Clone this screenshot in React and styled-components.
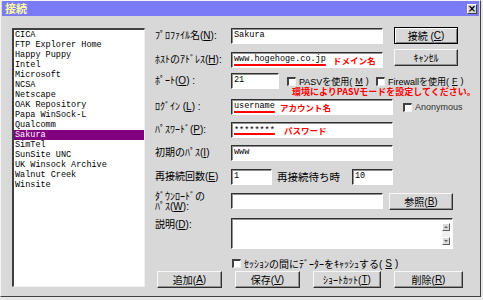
import styled, { createGlobalStyle } from "styled-components";

const GlobalStyle = createGlobalStyle`
  html, body {
    margin: 0;
    padding: 0;
    background: #e8e8e8;
  }
  body {
    width: 483px;
    height: 300px;
    overflow: hidden;
  }
`;

const ui = `"Liberation Sans", "Noto Sans CJK JP", sans-serif`;
const jp = `"Noto Sans CJK JP", sans-serif`;
const mono = `"Liberation Mono", "DejaVu Sans Mono", monospace`;

const sites = [
  "CICA",
  "FTP Explorer Home",
  "Happy Puppy",
  "Intel",
  "Microsoft",
  "NCSA",
  "Netscape",
  "OAK Repository",
  "Papa WinSock-L",
  "Qualcomm",
  "Sakura",
  "SimTel",
  "SunSite UNC",
  "UK Winsock Archive",
  "Walnut Creek",
  "Winsite",
];

export default function App() {
  return (
    <>
      <GlobalStyle />
      <Window>
        <TitleBar>
          <TitleText>接続</TitleText>
          <CloseBox>×</CloseBox>
        </TitleBar>
        <Content>
          <ListBox>
            {sites.map(name => (
              <ListItem key={name} $selected={name === "Sakura"}>
                {name}
              </ListItem>
            ))}
          </ListBox>

          <Form>
            <Row $h={24}>
              <Label>ﾌﾟﾛﾌｧｲﾙ名(<Key>N</Key>):</Label>
              <Field $w={152}>Sakura</Field>
              <DefaultButton $w={64} $ml={11}>
                接続 (<Key>C</Key>)
              </DefaultButton>
            </Row>

            <Row $h={21}>
              <Label>ﾎｽﾄのｱﾄﾞﾚｽ(<Key>H</Key>):</Label>
              <Field $w={152}>
                <Marked>www.hogehoge.co.jp</Marked>
                <Note $left={101} $top={1}>ドメイン名</Note>
              </Field>
              <Button $w={64} $ml={11} $mt={-3}>
                ｷｬﾝｾﾙ
              </Button>
            </Row>

            <Row $h={26}>
              <Label>ﾎﾟｰﾄ(<Key>O</Key>) :</Label>
              <Field $w={48}>21</Field>
              <CheckLabel $w={89} $ml={8} $small>
                <CheckBox />
                PASVを使用(<Key>M</Key>)
              </CheckLabel>
              <CheckLabel $small>
                <CheckBox />
                Firewallを使用(<Key>F</Key>)
              </CheckLabel>
              <Warning>環境によりPASVモードを設定してください。</Warning>
            </Row>

            <Row $h={23}>
              <Label>ﾛｸﾞｲﾝ (<Key>L</Key>) :</Label>
              <Field $w={162}>
                <Marked>username</Marked>
                <Note $left={48} $top={1}>アカウント名</Note>
              </Field>
              <CheckLabel $ml={10} $small $muted>
                <CheckBox />
                Anonymous
              </CheckLabel>
            </Row>

            <Row $h={23}>
              <Label>ﾊﾟｽﾜｰﾄﾞ(<Key>P</Key>):</Label>
              <Field $w={162}>
                <Marked $low>********</Marked>
                <Note $left={52} $top={1}>パスワード</Note>
              </Field>
            </Row>

            <Row $h={24}>
              <Label>初期のﾊﾟｽ(<Key>I</Key>)</Label>
              <Field $w={162}>www</Field>
            </Row>

            <Row $h={24}>
              <Label>再接続回数(<Key>E</Key>)</Label>
              <Field $w={41}>1</Field>
              <InlineLabel>再接続待ち時</InlineLabel>
              <Field $w={41}>10</Field>
            </Row>

            <Row $h={25}>
              <Label $two>
                ﾀﾞｳﾝﾛｰﾄﾞの
                <br />
                ﾊﾟｽ(<Key>W</Key>):
              </Label>
              <Field $w={152} />
              <Button $w={64} $ml={6}>
                参照(<Key>B</Key>)
              </Button>
            </Row>

            <Row $h={37}>
              <Label $top>説明(<Key>D</Key>):</Label>
              <TextArea>
                <ScrollColumn>
                  <Arrow $up />
                  <Arrow />
                </ScrollColumn>
              </TextArea>
            </Row>

            <Row $h={16}>
              <CheckLabel $ml={77}>
                <CheckBox />
                ｾｯｼｮﾝの間にﾃﾞｰﾀｰをｷｬｯｼｭする(<Key>S</Key>)
              </CheckLabel>
            </Row>

            <ButtonRow>
              <Button $w={65}>
                追加(<Key>A</Key>)
              </Button>
              <Button $w={65}>
                保存(<Key>V</Key>)
              </Button>
              <Button $w={68}>
                ｼｮｰﾄｶｯﾄ(<Key>T</Key>)
              </Button>
              <Button $w={69}>
                削除(<Key>R</Key>)
              </Button>
            </ButtonRow>
          </Form>
        </Content>
      </Window>
    </>
  );
}

const Window = styled.div`
  width: 481px;
  height: 297px;
  box-sizing: border-box;
  background: #d8d8d8;
  border-top: 1px solid #f4f4f4;
  border-left: 1px solid #f4f4f4;
  border-right: 1px solid #404040;
  border-bottom: 1px solid #404040;
  display: flex;
  flex-direction: column;
  font-family: ${ui};
  font-size: 10px;
  color: #000;
`;

const TitleBar = styled.div`
  height: 15px;
  margin: 0 1px;
  padding: 0 2px 0 3px;
  background: #7b7bf7;
  display: flex;
  align-items: center;
  justify-content: space-between;
  flex: none;
`;

const TitleText = styled.span`
  font-family: ${jp};
  font-weight: 700;
  font-size: 11px;
  line-height: 15px;
  color: #ffffa0;
`;

const CloseBox = styled.div`
  width: 10px;
  height: 10px;
  box-sizing: border-box;
  background: #d8d8d8;
  border-top: 1px solid #fff;
  border-left: 1px solid #fff;
  border-right: 1px solid #404040;
  border-bottom: 1px solid #404040;
  display: flex;
  align-items: center;
  justify-content: center;
  font-family: "DejaVu Sans", sans-serif;
  font-weight: 700;
  font-size: 10px;
  line-height: 8px;
`;

const Content = styled.div`
  display: flex;
  padding: 12px 0 0 11px;
`;

const ListBox = styled.div`
  width: 133px;
  height: 259px;
  box-sizing: border-box;
  flex: none;
  background: #fff;
  border-top: 2px solid #404040;
  border-left: 2px solid #404040;
  border-right: 1px solid #f0f0f0;
  border-bottom: 1px solid #f0f0f0;
  font-family: ${mono};
  font-size: 8.5px;
  line-height: 10px;
`;

const ListItem = styled.div`
  height: 10px;
  padding-left: 1px;
  white-space: nowrap;
  background: ${p => (p.$selected ? "#800080" : "transparent")};
  color: ${p => (p.$selected ? "#fff" : "#000")};
`;

const Form = styled.div`
  margin-left: 10px;
  width: 325px;
  display: flex;
  flex-direction: column;
`;

const Row = styled.div`
  position: relative;
  height: ${p => p.$h}px;
  display: flex;
  align-items: flex-start;
  flex: none;
`;

const Label = styled.div`
  width: 76px;
  flex: none;
  white-space: nowrap;
  line-height: ${p => (p.$two ? "10px" : p.$top ? "12px" : "16px")};
  margin-top: ${p => (p.$two ? "-1px" : p.$top ? "1px" : "0")};
`;

const InlineLabel = styled.div`
  width: 75px;
  margin-left: 5px;
  line-height: 16px;
  font-size: 10.5px;
  white-space: nowrap;
`;

const Key = styled.span`
  text-decoration: underline;
`;

const Field = styled.div`
  position: relative;
  width: ${p => p.$w}px;
  height: 16px;
  box-sizing: border-box;
  flex: none;
  background: #fff;
  border-top: 1px solid #303030;
  border-left: 1px solid #303030;
  border-right: 1px solid #fff;
  border-bottom: 1px solid #fff;
  box-shadow: inset 1px 1px #909090;
  padding-left: 2px;
  font-family: ${mono};
  font-size: 8.5px;
  line-height: 13px;
  white-space: nowrap;
`;

const Marked = styled.span`
  display: inline-block;
  line-height: ${p => (p.$low ? "17px" : "13px")};
  text-decoration: underline;
  text-decoration-color: #ff0000;
  text-decoration-thickness: 2px;
  text-underline-offset: ${p => (p.$low ? "0px" : "3px")};
`;

const Note = styled.span`
  position: absolute;
  left: ${p => p.$left}px;
  top: ${p => p.$top}px;
  font-family: ${jp};
  font-weight: 700;
  font-size: 8.5px;
  line-height: 12px;
  color: #ff0000;
  white-space: nowrap;
`;

const Warning = styled.span`
  position: absolute;
  left: 137px;
  top: 13px;
  font-family: ${jp};
  font-weight: 700;
  font-size: 9px;
  line-height: 12px;
  color: #ff0000;
  white-space: nowrap;
`;

const CheckLabel = styled.div`
  display: flex;
  align-items: center;
  gap: 3px;
  height: 16px;
  flex: none;
  white-space: nowrap;
  font-size: ${p => (p.$small ? "9px" : "10px")};
  width: ${p => (p.$w ? `${p.$w}px` : "auto")};
  margin-left: ${p => p.$ml || 0}px;
  color: ${p => (p.$muted ? "#303030" : "#000")};
`;

const CheckBox = styled.span`
  width: 9px;
  height: 9px;
  box-sizing: border-box;
  flex: none;
  background: #fff;
  border-top: 2px solid #404040;
  border-left: 2px solid #404040;
  border-right: 1px solid #f0f0f0;
  border-bottom: 1px solid #f0f0f0;
`;

const Button = styled.div`
  width: ${p => p.$w}px;
  height: 17px;
  margin-left: ${p => p.$ml || 0}px;
  margin-top: ${p => p.$mt || 0}px;
  box-sizing: border-box;
  flex: none;
  display: flex;
  align-items: center;
  justify-content: center;
  background: #d8d8d8;
  border-top: 1px solid #f8f8f8;
  border-left: 1px solid #f8f8f8;
  border-right: 1px solid #303030;
  border-bottom: 1px solid #303030;
  box-shadow: inset -1px -1px #909090;
  white-space: nowrap;
`;

const DefaultButton = styled(Button)`
  margin-top: -1px;
  border: 1px solid #000;
  box-shadow: inset 1px 1px #fff, inset -1px -1px #808080;
`;

const TextArea = styled.div`
  width: 222px;
  height: 31px;
  box-sizing: border-box;
  flex: none;
  background: #fff;
  border-top: 1px solid #303030;
  border-left: 1px solid #303030;
  border-right: 1px solid #fff;
  border-bottom: 1px solid #fff;
  box-shadow: inset 1px 1px #909090;
  display: flex;
  justify-content: flex-end;
  padding: 4px 2px 3px 0;
`;

const ScrollColumn = styled.div`
  width: 8px;
  display: flex;
  flex-direction: column;
  justify-content: space-between;
  background: #f0f0f0;
`;

const Arrow = styled.span`
  width: 8px;
  height: 8px;
  box-sizing: border-box;
  background: #d8d8d8;
  border-top: 1px solid #fff;
  border-left: 1px solid #fff;
  border-right: 1px solid #606060;
  border-bottom: 1px solid #606060;
  display: flex;
  align-items: center;
  justify-content: center;
  &::after {
    content: "";
    border-left: 2px solid transparent;
    border-right: 2px solid transparent;
    ${p =>
      p.$up
        ? "border-bottom: 2px solid #606060;"
        : "border-top: 2px solid #606060;"}
  }
`;

const ButtonRow = styled.div`
  display: flex;
  gap: 13px;
  margin-left: 2px;
`;
